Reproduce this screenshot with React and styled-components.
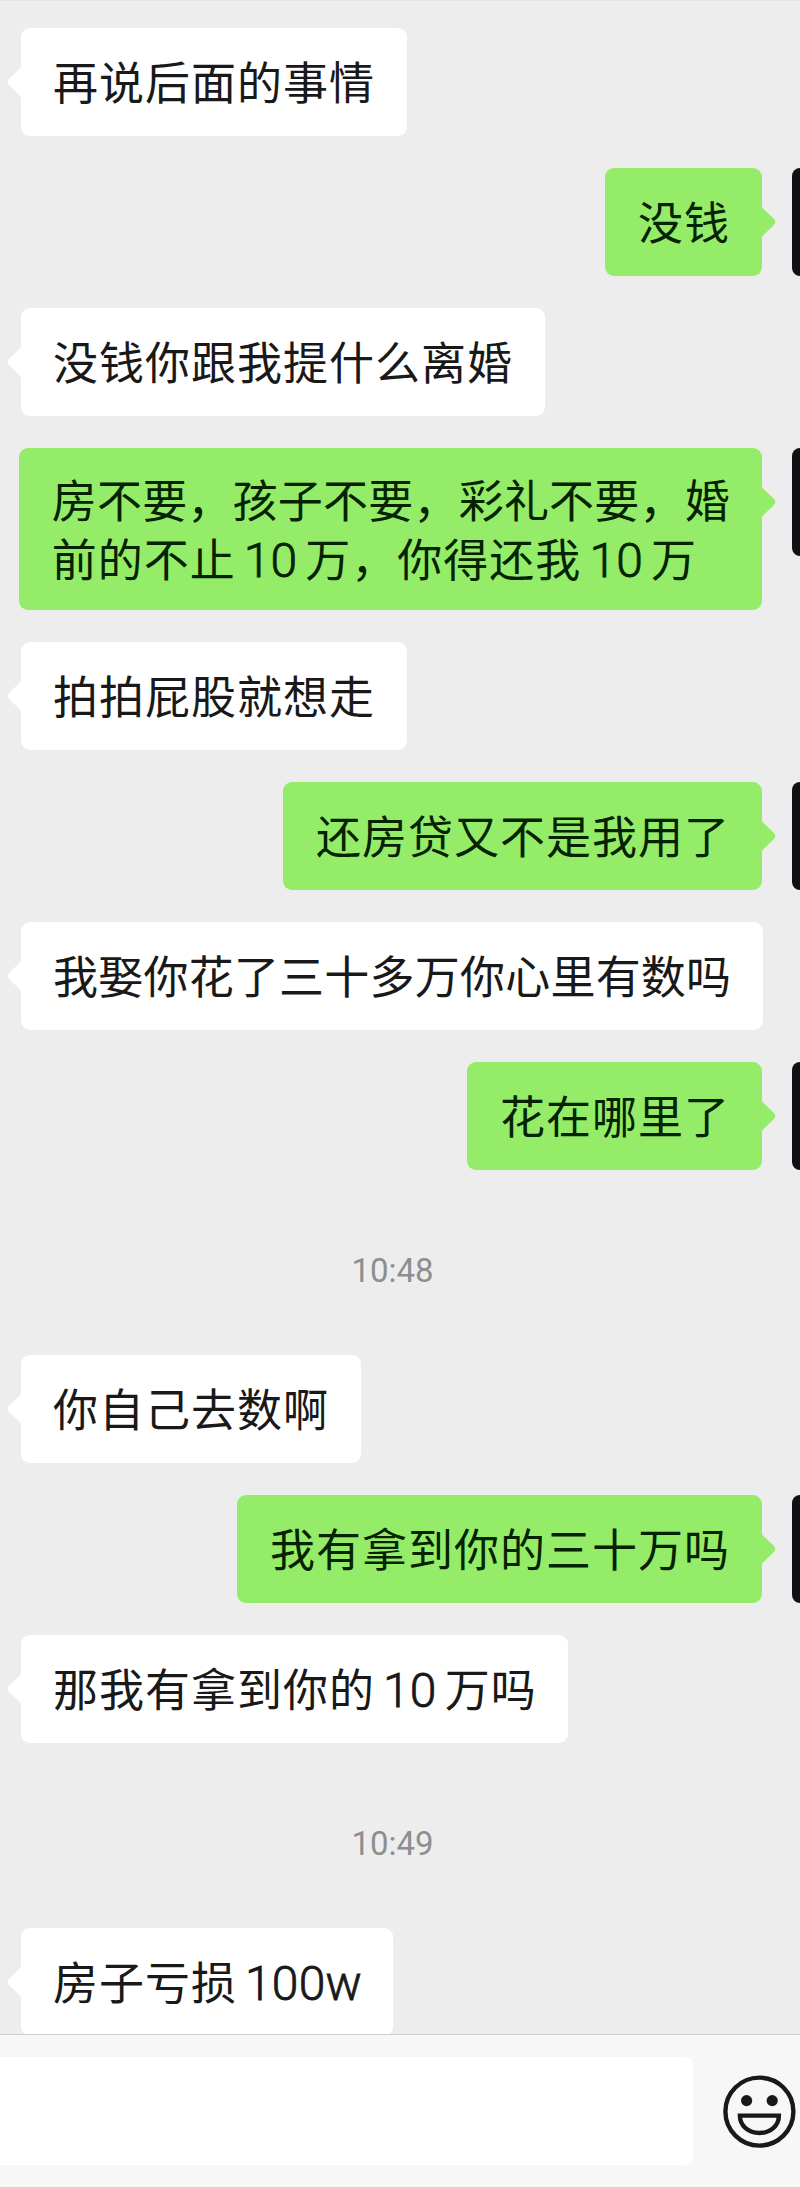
import styled, { createGlobalStyle } from "styled-components";

const GlobalStyle = createGlobalStyle`
  * {
    box-sizing: border-box;
  }

  body {
    margin: 0;
    background: #ededed;
    font-family: "Noto Sans CJK SC", sans-serif;
  }
`;

const Page = styled.div`
  width: 800px;
  height: 2187px;
  display: flex;
  flex-direction: column;
  overflow: hidden;
  background: #ededed;
`;

const Messages = styled.main`
  flex: 1;
  min-height: 0;
  display: flex;
  flex-direction: column;
  gap: 32px;
  padding-top: 27px;
  overflow: hidden;
  border-top: 1px solid #e4e4e4;
`;

const Row = styled.div`
  flex: none;
  display: flex;
  align-items: flex-start;
  justify-content: ${(props) => (props.$mine ? "flex-end" : "flex-start")};
  padding-left: ${(props) => (props.$mine ? "0" : "20.5px")};
`;

const Bubble = styled.div`
  position: relative;
  flex: none;
  padding: ${(props) =>
    props.$multiline ? "21px 31.5px 23px 32.5px" : "23px 31.5px 26px 32.5px"};
  border-radius: 9px;
  background: ${(props) => (props.$mine ? "#95ec69" : "#ffffff")};
  color: ${(props) => (props.$mine ? "#052300" : "#191919")};
  font-size: 45px;
  line-height: 59px;
  white-space: nowrap;
`;

const Tail = styled.svg`
  position: absolute;
  top: 38px;
  width: 15px;
  height: 32px;
  fill: ${(props) => (props.$mine ? "#95ec69" : "#ffffff")};

  ${(props) =>
    props.$mine
      ? `
  right: -14px;
  `
      : `
  left: -14px;
  transform: scaleX(-1);
  `}
`;

const Line = styled.div`
  letter-spacing: ${(props) => (props.$tight ? "0.22px" : "1px")};
`;

const Latin = styled.span`
  margin-left: 8px;
  margin-right: ${(props) => (props.$last ? "0" : "8px")};
  font-family: Roboto, sans-serif;
  font-size: 48px;
  font-weight: 300;
  line-height: 1;
  letter-spacing: 0.2px;
  -webkit-text-stroke: 0.8px currentColor;
`;

const Avatar = styled.div`
  flex: none;
  width: 8.5px;
  height: 108px;
  margin-left: 30px;
  border-radius: 9px 0 0 9px;
  background: #121014;
`;

const Time = styled.time`
  flex: none;
  height: 121px;
  padding-right: 15px;
  color: #8e8e8e;
  font-family: Roboto, sans-serif;
  font-size: 33px;
  line-height: 138px;
  text-align: center;
`;

const InputBar = styled.footer`
  flex: none;
  height: 153px;
  display: flex;
  align-items: flex-start;
  gap: 29px;
  padding-top: 22px;
  border-top: 1px solid #cccdcc;
  background: #f7f7f7;
`;

const Input = styled.div`
  width: 692.5px;
  height: 107.5px;
  border-radius: 0 8px 8px 0;
  background: #ffffff;
`;

const EmojiButton = styled.button`
  width: 74px;
  height: 74px;
  margin-top: 17px;
  padding: 0;
  border: 0;
  background: none;
`;

// letters and digits get a little air next to the hanzi
const renderText = (text) =>
  text
    .split(/([0-9a-z]+)/)
    .map((part, index, parts) =>
      index % 2 ? (
        <Latin key={index} $last={!parts[index + 1]}>
          {part}
        </Latin>
      ) : (
        part
      )
    );

const Message = ({ mine, lines }) => (
  <Row $mine={mine}>
    <Bubble $mine={mine} $multiline={lines.length > 1}>
      {lines.map((line) => (
        <Line key={line} $tight={line.length > 14 && !/[0-9]/.test(line)}>
          {renderText(line)}
        </Line>
      ))}
      <Tail $mine={mine} viewBox="0 0 15 32">
        <path d="M0 0 L1 0 Q1 2 3 3.5 L13 13 Q15.5 16 13 19 L3 28.5 Q1 30 1 32 L0 32 Z" />
      </Tail>
    </Bubble>
    {mine && <Avatar />}
  </Row>
);

const Smile = () => (
  <svg width="74" height="74" viewBox="0 0 74 74" fill="none">
    <circle cx="37.4" cy="37.6" r="34" stroke="#191919" strokeWidth="4.4" />
    <circle cx="24.6" cy="26.6" r="5.6" fill="#191919" />
    <circle cx="50.2" cy="26.6" r="5.6" fill="#191919" />
    <path
      d="M17.9 41.6 H56.9 C56.9 52 48.4 59 37.4 59 S17.9 52 17.9 41.6 Z"
      stroke="#191919"
      strokeWidth="4.4"
    />
  </svg>
);

const chat = [
  { lines: ["再说后面的事情"] },
  { mine: true, lines: ["没钱"] },
  { lines: ["没钱你跟我提什么离婚"] },
  {
    mine: true,
    lines: ["房不要，孩子不要，彩礼不要，婚", "前的不止10万，你得还我10万"],
  },
  { lines: ["拍拍屁股就想走"] },
  { mine: true, lines: ["还房贷又不是我用了"] },
  { lines: ["我娶你花了三十多万你心里有数吗"] },
  { mine: true, lines: ["花在哪里了"] },
  { time: "10:48" },
  { lines: ["你自己去数啊"] },
  { mine: true, lines: ["我有拿到你的三十万吗"] },
  { lines: ["那我有拿到你的10万吗"] },
  { time: "10:49" },
  { lines: ["房子亏损100w"] },
];

export default function App() {
  return (
    <>
      <GlobalStyle />
      <Page>
        <Messages>
          {chat.map((item, index) =>
            item.time ? (
              <Time key={index}>{item.time}</Time>
            ) : (
              <Message key={index} mine={item.mine} lines={item.lines} />
            )
          )}
        </Messages>
        <InputBar>
          <Input />
          <EmojiButton>
            <Smile />
          </EmojiButton>
        </InputBar>
      </Page>
    </>
  );
}
